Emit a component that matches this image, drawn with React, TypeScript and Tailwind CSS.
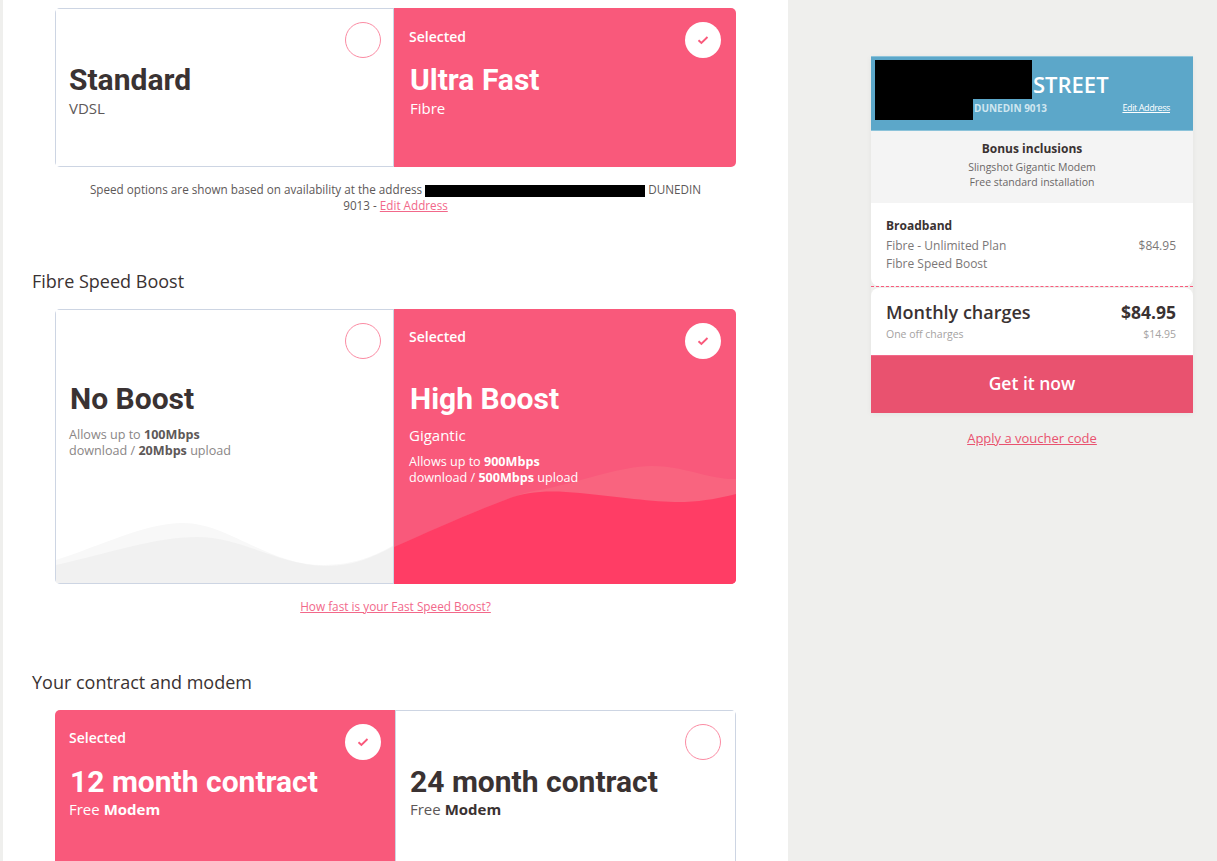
function Circle({ selected, className }: { selected?: boolean; className: string }) {
  if (selected) {
    return (
      <div className={`absolute top-[14px] flex h-9 w-9 items-center justify-center rounded-full bg-white ${className}`}>
        <svg width="12" height="10" viewBox="0 0 12 10" fill="none">
          <path d="M1.5 5.2 L4.4 8 L10.5 2" stroke="#f9597b" strokeWidth="1.9" />
        </svg>
      </div>
    )
  }
  return <div className={`absolute top-[13px] h-9 w-9 rounded-full border border-[#fb8ba3] bg-white ${className}`} />
}

function Panel({
  selected,
  className,
  circle,
  wave,
  children,
}: {
  selected?: boolean
  className: string
  circle: string
  wave?: React.ReactNode
  children: React.ReactNode
}) {
  return (
    <div
      className={`relative overflow-hidden ${className} ${
        selected ? "bg-[#f9597b] text-white" : "border border-[#cdd5e3] bg-white text-[#3a3232]"
      }`}
    >
      {wave}
      <Circle selected={selected} className={circle} />
      <div className="relative">{children}</div>
    </div>
  )
}

function Selected({ className }: { className: string }) {
  return <div className={`text-[14px] font-semibold leading-[18px] ${className}`}>Selected</div>
}

function Title({ children, className = "" }: { children: React.ReactNode; className?: string }) {
  return <div className={`font-['Roboto',sans-serif] text-[30px] font-bold leading-9 ${className}`}>{children}</div>
}

function SectionTitle({ children, className }: { children: React.ReactNode; className: string }) {
  return <h2 className={`text-[18px] font-medium leading-6 text-[#3a3232] ${className}`}>{children}</h2>
}

function LeftWave() {
  return (
    <svg className="absolute bottom-0 left-0" width="338" height="70" viewBox="56 513 338 70">
      <path d="M56 560 C100 546 145 523 183 523 C228 523 268 565 323 565 C355 565 375 556 394 545 L394 585 L56 585 Z" fill="#f8f8f8" />
      <path d="M56 565 C110 553 155 537 197 537 C242 537 278 565 326 566 C355 566 375 556 394 546 L394 585 L56 585 Z" fill="#f1f1f1" />
    </svg>
  )
}

function RightWave() {
  return (
    <svg className="absolute bottom-0 left-0" width="342" height="124" viewBox="394 460 342 124">
      <path d="M394 547 C430 531 475 511 505 500 C518 495 530 491 540 490 C580 482 620 466 652 466 C685 466 710 480 736 479 L736 584 L394 584 Z" fill="#f9647f" />
      <path d="M394 547 C430 531 475 511 505 500 C525 491 550 490 580 493 C620 497 660 503 685 502 C705 501 720 498 736 494 L736 584 L394 584 Z" fill="#ff3d65" />
    </svg>
  )
}

function Main() {
  return (
    <main className="h-full w-[785px] bg-white pl-[29px] font-['Open_Sans',sans-serif]">
      <div className="ml-[23px] mt-[8px] flex w-[681px] overflow-hidden rounded-[5px]">
        <Panel className="h-[159px] w-[339px] pl-[13px] pt-[53px]" circle="right-[12px]">
          <Title>Standard</Title>
          <div className="text-[15px] leading-5 text-[#5d5858]">VDSL</div>
        </Panel>
        <Panel selected className="h-[159px] w-[342px] pl-[15px] pt-[20px]" circle="right-[15px]">
          <Selected className="mb-[16px]" />
          <Title className="ml-px">Ultra Fast</Title>
          <div className="ml-px text-[15px] leading-5">Fibre</div>
        </Panel>
      </div>

      <p className="ml-[23px] mt-[14px] w-[681px] px-[25px] text-center text-[11.7px] leading-4 text-[#5d5858]">
        Speed options are shown based on availability at the address{" "}
        <span className="inline-block h-3 w-[220px] bg-black align-middle" /> DUNEDIN 9013 -{" "}
        <a className="text-[#f2688a] underline">Edit Address</a>
      </p>

      <SectionTitle className="mt-[56px]">Fibre Speed Boost</SectionTitle>

      <div className="ml-[23px] mt-[16px] flex w-[681px] overflow-hidden rounded-[5px]">
        <Panel className="h-[275px] w-[339px] pl-[13px] pt-[71px]" circle="right-[12px]" wave={<LeftWave />}>
          <Title className="ml-px">No Boost</Title>
          <div className="mt-[10px] text-[12.6px] leading-4 text-[#8a8686]">
            Allows up to <b className="text-[#5d5858]">100Mbps</b>
            <br />
            download / <b className="text-[#5d5858]">20Mbps</b> upload
          </div>
        </Panel>
        <Panel selected className="h-[275px] w-[342px] pl-[15px] pt-[19px]" circle="right-[15px]" wave={<RightWave />}>
          <Selected className="mb-[35px]" />
          <Title className="ml-px">High Boost</Title>
          <div className="mt-[8px] text-[15px] leading-5">Gigantic</div>
          <div className="mt-[9px] text-[12.6px] leading-4">
            Allows up to <b>900Mbps</b>
            <br />
            download / <b>500Mbps</b> upload
          </div>
        </Panel>
      </div>

      <div className="ml-[23px] mt-[14px] w-[681px] text-center text-[11.8px] leading-4">
        <a className="text-[#f2688a] underline">How fast is your Fast Speed Boost?</a>
      </div>

      <SectionTitle className="mt-[56px]">Your contract and modem</SectionTitle>

      <div className="ml-[23px] mt-[16px] flex w-[681px] overflow-hidden rounded-t-[5px]">
        <Panel selected className="h-[170px] w-[340px] pl-[14px] pt-[19px]" circle="right-[14px]">
          <Selected className="mb-[17px]" />
          <Title className="ml-px">12 month contract</Title>
          <div className="-mt-px text-[15px] leading-5">
            Free <b>Modem</b>
          </div>
        </Panel>
        <Panel className="h-[170px] w-[341px] pl-[14px] pt-[53px]" circle="right-[14px]">
          <Title>24 month contract</Title>
          <div className="-mt-px text-[15px] leading-5 text-[#5d5858]">
            Free <b className="text-[#3a3232]">Modem</b>
          </div>
        </Panel>
      </div>
    </main>
  )
}

function Sidebar() {
  return (
    <aside className="flex-1 pl-[83px] pt-[56px] font-['Open_Sans',sans-serif]">
      <div className="w-[322px] shadow-[0_1px_6px_rgba(0,0,0,0.05)]">
        <div className="relative h-[75px] border-y border-[#8cc3da] bg-[#5ca7c9] text-white">
          <div className="pl-[162px] pt-[13px] text-[22px] font-semibold leading-7">STREET</div>
          <div className="mt-[2px] flex items-center pl-[103px] pr-[23px]">
            <span className="text-[10px] font-bold leading-[14px] text-[#cfe6f0]">DUNEDIN 9013</span>
            <a className="ml-auto pt-[1px] text-[9px] leading-[14px] tracking-[-0.4px] underline">Edit Address</a>
          </div>
          <div className="absolute left-[4px] top-[3px] h-[39px] w-[157px] bg-black" />
          <div className="absolute left-[4px] top-[42px] h-[21px] w-[98px] bg-black" />
        </div>

        <div className="h-[72px] bg-[#f4f4f4] pt-[9px] text-center text-[#6b6767]">
          <div className="text-[12px] font-bold leading-[18px] text-[#3a3232]">Bonus inclusions</div>
          <div className="mt-[2px] text-[10.5px] leading-[15px]">Slingshot Gigantic Modem</div>
          <div className="text-[10.5px] leading-[15px]">Free standard installation</div>
        </div>

        <div className="h-[83px] rounded-b-[8px] bg-white pl-[15px] pr-[17px] pt-[14px] text-[12px] text-[#7b7777]">
          <div className="text-[12px] font-bold leading-[18px] text-[#3a3232]">Broadband</div>
          <div className="flex justify-between pt-[2px] leading-[18px]">
            <span>Fibre - Unlimited Plan</span>
            <span>$84.95</span>
          </div>
          <div className="leading-[17px]">Fibre Speed Boost</div>
        </div>

        <div className="border-t border-dashed border-[#f9597b]" />
        <div className="mt-[1px] h-[67px] rounded-t-[8px] bg-white pl-[15px] pr-[17px] pt-[12px]">
          <div className="flex items-center justify-between text-[#3a3232]">
            <span className="text-[18px] font-semibold leading-6">Monthly charges</span>
            <span className="text-[17.5px] font-bold leading-6">$84.95</span>
          </div>
          <div className="mt-[3px] flex justify-between text-[10.5px] leading-[14px] text-[#a5a2a2]">
            <span>One off charges</span>
            <span>$14.95</span>
          </div>
        </div>

        <button className="block h-[58px] w-full border-t border-[#f2688a] bg-[#e9526f] pb-[2px] text-center text-[17.5px] font-semibold text-white">
          Get it now
        </button>
      </div>

      <div className="mt-[16px] w-[322px] text-center text-[13px] leading-[18px]">
        <a className="text-[#e9526f] underline">Apply a voucher code</a>
      </div>
    </aside>
  )
}

export default function App() {
  return (
    <div className="flex h-[861px] w-full overflow-hidden bg-[#efefed]">
      <div className="w-[3px]" />
      <Main />
      <Sidebar />
    </div>
  )
}
